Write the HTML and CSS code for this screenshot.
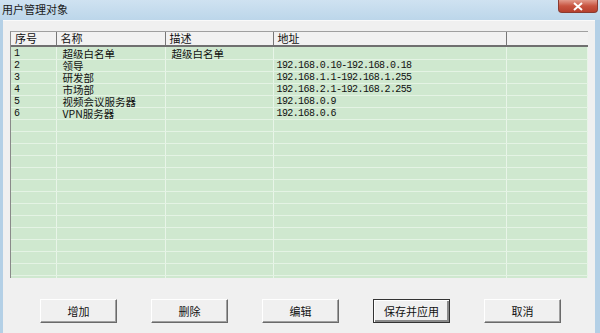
FILE: index.html
```html
<!DOCTYPE html>
<html>
<head>
    <title>用户管理对象</title>
    <link rel="stylesheet" href="styles.css">
</head>
<body>
    <div class="window">
        <div class="titlebar">
            <span class="title">用户管理对象</span>
            <span class="close-btn">
                <svg width="12" height="9" viewBox="0 0 12 9"><path d="M2 1 L10 8 M10 1 L2 8" stroke="#fff" stroke-width="2"/></svg>
            </span>
        </div>
        <div class="client">
            <div class="list">
                <table>
                    <colgroup>
                        <col class="c-no">
                        <col class="c-name">
                        <col class="c-desc">
                        <col class="c-addr">
                        <col>
                    </colgroup>
                    <thead>
                        <tr>
                            <th>序号</th>
                            <th>名称</th>
                            <th>描述</th>
                            <th>地址</th>
                            <th></th>
                        </tr>
                    </thead>
                    <tbody id="rows"></tbody>
                </table>
            </div>
            <div class="buttons">
                <button class="btn">增加</button>
                <button class="btn">删除</button>
                <button class="btn">编辑</button>
                <button class="btn default">保存并应用</button>
                <button class="btn">取消</button>
            </div>
        </div>
    </div>
    <script>
        var items = [
            ['1', '超级白名单', '超级白名单', ''],
            ['2', '领导', '', '192.168.0.10-192.168.0.18'],
            ['3', '研发部', '', '192.168.1.1-192.168.1.255'],
            ['4', '市场部', '', '192.168.2.1-192.168.2.255'],
            ['5', '视频会议服务器', '', '192.168.0.9'],
            ['6', 'VPN服务器', '', '192.168.0.6']
        ];
        var tbody = document.getElementById('rows');
        for (var i = 0; i < 20; i++) {
            var item = items[i] || ['', '', '', ''];
            var row = document.createElement('tr');
            row.innerHTML = `
                <td class="num">${item[0]}</td>
                <td>${item[1]}</td>
                <td>${item[2]}</td>
                <td class="num">${item[3]}</td>
                <td></td>
            `;
            tbody.appendChild(row);
        }
    </script>
</body>
</html>
```

FILE: styles.css
```css
body {
    margin: 0;
    font-family: "Noto Sans CJK SC", sans-serif;
    font-size: 11px;
    color: #111;
}

.window {
    width: 600px;
    height: 333px;
    overflow: hidden;
    background: #b4d0e6;
}

.titlebar {
    height: 20px;
    position: relative;
    background: linear-gradient(#cfe2f1, #bcd6ea);
}

.title {
    display: block;
    padding: 3px 0 0 2px;
    line-height: 13px;
    color: #1a1a1a;
}

.close-btn {
    position: absolute;
    left: 558px;
    top: 0;
    width: 40px;
    height: 13px;
    border: 1px solid #8a3a30;
    border-top: none;
    border-radius: 0 0 4px 4px;
    background: linear-gradient(#e29b8c, #c85440 50%, #b6402e);
    display: flex;
    justify-content: center;
    align-items: center;
    box-sizing: border-box;
}

.client {
    margin: 0 5px 0 3px;
    height: 313px;
    background: #f0f0f0;
    border-top: 1px solid #fafafa;
    box-sizing: border-box;
    padding: 10px 4px 0 7px;
}

.list {
    width: 578px;
    height: 247px;
    overflow: hidden;
    background: #cfe8cf;
    border-left: 1px solid #8a8a8a;
    border-top: 1px solid #a0a0a0;
    box-sizing: border-box;
}

table {
    width: 100%;
    border-collapse: collapse;
    table-layout: fixed;
}

.c-no { width: 45px; }
.c-name { width: 109px; }
.c-desc { width: 108px; }
.c-addr { width: 233px; }

th {
    height: 13px;
    padding: 0 0 0 4px;
    font-weight: normal;
    text-align: left;
    line-height: 13px;
    background: #f2f2f2;
    border-right: 1px solid #777;
    border-bottom: 2px solid #707070;
}

th:last-child {
    border-right: none;
}

td {
    height: 11px;
    padding: 0 0 0 3px;
    font-size: 10.5px;
    line-height: 11px;
    white-space: nowrap;
    overflow: hidden;
    border-right: 1px solid #e8f5e8;
    border-bottom: 1px solid #e4f3e4;
}

tbody tr:first-child td {
    height: 12px;
    vertical-align: bottom;
}

td:nth-child(2), td:nth-child(3) {
    padding-left: 6px;
}

td.num {
    font-family: "Liberation Mono", monospace;
    font-size: 10px;
    letter-spacing: -0.6px;
    vertical-align: bottom;
}

.buttons {
    display: flex;
    gap: 34px;
    margin-top: 21px;
    padding-left: 30px;
}

.btn {
    width: 77px;
    height: 24px;
    padding: 0;
    font-family: "Noto Sans CJK SC", sans-serif;
    font-size: 11px;
    color: #111;
    background: #f0f0f0;
    border: 1px solid;
    border-color: #fff #6a6a6a #6a6a6a #fff;
    box-shadow: inset -1px -1px 0 #a0a0a0;
}

.btn.default {
    border: 1px solid #333;
    box-shadow: inset 1px 1px 0 #fff, inset -2px -2px 0 #8a8a8a;
}
```
